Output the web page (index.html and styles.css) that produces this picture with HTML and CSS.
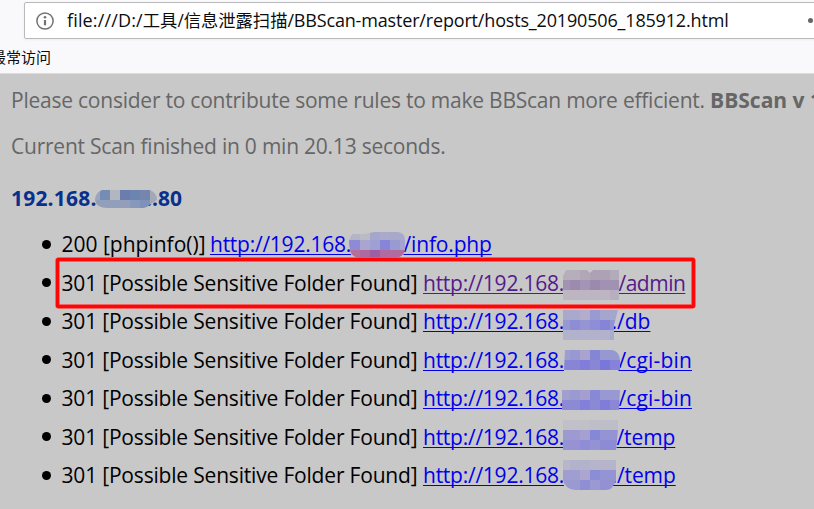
FILE: index.html
```html
<!DOCTYPE html>
<html lang="zh-CN">
<head>
<meta charset="utf-8">
<title>BBScan report</title>
<link rel="stylesheet" href="styles.css">
</head>
<body>
<header class="chrome">
  <div class="urlbar">
    <svg class="info" viewBox="0 0 18 18"><circle cx="9" cy="9" r="8.1" fill="none" stroke="#737373" stroke-width="1.5"/><circle cx="9" cy="5.3" r="1.3" fill="#737373"/><path d="M9 8v5.3" stroke="#737373" stroke-width="2.2"/></svg>
    <span class="url"><span class="scheme">file:///D:/</span><span class="cjk">工具/信息泄露扫描</span><span class="path">/BBScan-master/report/hosts_20190506_185912.html</span></span>
    <span class="more"></span>
  </div>
  <div class="bookmarks">最常访问</div>
</header>
<main class="report">
  <p class="note">Please consider to contribute some rules to make BBScan more efficient. <b>BBScan v 1.4</b></p>
  <p class="note done">Current Scan finished in 0 min 20.13 seconds.</p>
  <h2 class="host"><span>192.168.</span><span class="port">..80</span></h2>
  <ul class="results">
    <li><span class="ok">200 [phpinfo()]</span><a><span class="ip">http://192.168.</span><span class="tail info-php">/info.php</span></a></li>
    <li><span class="found">301 [Possible Sensitive Folder Found]</span><a class="visited"><span class="ip">http://192.168.</span><span class="tail admin">/admin</span></a></li>
    <li><span class="found">301 [Possible Sensitive Folder Found]</span><a><span class="ip">http://192.168.</span><span class="tail dotted">./db</span></a></li>
    <li><span class="found">301 [Possible Sensitive Folder Found]</span><a><span class="ip">http://192.168.</span><span class="tail cgi">/cgi-bin</span></a></li>
    <li><span class="found">301 [Possible Sensitive Folder Found]</span><a><span class="ip">http://192.168.</span><span class="tail cgi">/cgi-bin</span></a></li>
    <li><span class="found">301 [Possible Sensitive Folder Found]</span><a><span class="ip">http://192.168.</span><span class="tail temp">/temp</span></a></li>
    <li><span class="found">301 [Possible Sensitive Folder Found]</span><a><span class="ip">http://192.168.</span><span class="tail temp dotted">./temp</span></a></li>
  </ul>
</main>
<svg class="marks" viewBox="0 0 814 509">
  <defs>
    <clipPath id="c0"><path d="M102 190H150Q157 193 157 200L148 206Q146 208 141 208H108Q96 208 95 200Q95 193 102 190Z"/></clipPath>
    <clipPath id="c1"><path d="M353 234H365L374 232L398 232Q405 233 405 240V250Q404 257 395 258L365 259Q350 258 350 249Q347 238 353 234Z"/></clipPath>
    <clipPath id="c2"><path d="M566 270H587L590 273L593 270H619V300H563V276Z"/></clipPath>
    <clipPath id="c3"><path d="M563 310H618L614 325V340H563Z"/></clipPath>
    <clipPath id="c4"><path d="M565 350H612Q619 351 620 360V370H564Z"/></clipPath>
    <clipPath id="c5"><path d="M562 390H620L619 410H562Z"/></clipPath>
    <clipPath id="c6"><path d="M563 420H618V430L616 450H563V430Z"/></clipPath>
    <clipPath id="c7"><path d="M563 460H616V480Q613 490 606 490H575Q565 489 563 480Z"/></clipPath>
  </defs>
  <g clip-path="url(#c0)"><path fill="#9ba6bb" d="M90 190h10v10h-10z"/><path fill="#758cb5" d="M100 190h10v10h-10z"/><path fill="#b1b6c1" d="M110 190h10v10h-10z"/><path fill="#6b7dac" d="M120 190h10v10h-10z"/><path fill="#6c84b1" d="M130 190h10v10h-10z"/><path fill="#7684ae" d="M140 190h10v10h-10z"/><path fill="#a3a8b9" d="M150 190h10v20h-10z"/><path fill="#919fba" d="M90 200h30v10h-30z"/><path fill="#949eba" d="M120 200h10v10h-10z"/><path fill="#8799bb" d="M130 200h10v10h-10z"/><path fill="#7e91b9" d="M140 200h10v10h-10z"/></g>
  <g clip-path="url(#c1)"><path fill="#b5b4c6" d="M345 230h15v10h-15z"/><path fill="#bbbac7" d="M360 230h10v10h-10z"/><path fill="#a5a6cc" d="M370 230h10v10h-10z"/><path fill="#aaa9ca" d="M380 230h10v10h-10z"/><path fill="#a8a8cd" d="M390 230h20v10h-20z"/><path fill="#8c8bd4" d="M345 240h15v10h-15z"/><path fill="#aaa4cf" d="M360 240h10v10h-10z"/><path fill="#9e9fd2" d="M370 240h10v10h-10z"/><path fill="#8785d8" d="M380 240h10v10h-10z"/><path fill="#999ad2" d="M390 240h10v10h-10z"/><path fill="#a5a3d0" d="M400 240h10v10h-10z"/><path fill="#b66e9b" d="M345 250h15v10h-15z"/><path fill="#ae6a9e" d="M360 250h10v10h-10z"/><path fill="#9d5fa3" d="M370 250h10v10h-10z"/><path fill="#b26ba0" d="M380 250h30v10h-30z"/></g>
  <g clip-path="url(#c2)"><path fill="#b6aeba" d="M560 270h20v10h-20z"/><path fill="#b1a8b7" d="M580 270h10v10h-10z"/><path fill="#ada2b5" d="M590 270h20v10h-20z"/><path fill="#b4abba" d="M610 270h10v10h-10z"/><path fill="#a294b0" d="M560 280h10v10h-10z"/><path fill="#9c8baf" d="M570 280h10v10h-10z"/><path fill="#a595b4" d="M580 280h10v10h-10z"/><path fill="#9b89ae" d="M590 280h10v10h-10z"/><path fill="#a191b2" d="M600 280h20v10h-20z"/><path fill="#bdb5c1" d="M560 290h50v10h-50z"/><path fill="#b6afc0" d="M610 290h10v10h-10z"/></g>
  <g clip-path="url(#c3)"><path fill="#a9aacb" d="M560 310h20v10h-20z"/><path fill="#b1adca" d="M580 310h10v10h-10z"/><path fill="#979bd0" d="M590 310h10v10h-10z"/><path fill="#a5a6cd" d="M600 310h20v10h-20z"/><path fill="#9998d2" d="M560 320h10v10h-10z"/><path fill="#8c8dd5" d="M570 320h10v10h-10z"/><path fill="#9794d3" d="M580 320h10v10h-10z"/><path fill="#8d8ed5" d="M590 320h10v10h-10z"/><path fill="#8584d9" d="M600 320h10v10h-10z"/><path fill="#9292d3" d="M610 320h10v10h-10z"/><path fill="#b3b2cd" d="M560 330h50v10h-50z"/><path fill="#a9abcf" d="M610 330h10v10h-10z"/></g>
  <g clip-path="url(#c4)"><path fill="#9d9dd0" d="M560 350h10v10h-10z"/><path fill="#9899d2" d="M570 350h10v10h-10z"/><path fill="#aaa3ce" d="M580 350h10v10h-10z"/><path fill="#8386d5" d="M590 350h10v10h-10z"/><path fill="#9797d2" d="M600 350h20v10h-20z"/><path fill="#8885d6" d="M560 360h20v10h-20z"/><path fill="#817edb" d="M580 360h10v10h-10z"/><path fill="#8986d6" d="M590 360h10v10h-10z"/><path fill="#7a77da" d="M600 360h10v10h-10z"/><path fill="#8582d8" d="M610 360h10v10h-10z"/></g>
  <g clip-path="url(#c5)"><path fill="#a19fce" d="M560 390h10v10h-10z"/><path fill="#9a9ad1" d="M570 390h10v10h-10z"/><path fill="#a59fd0" d="M580 390h10v10h-10z"/><path fill="#8789d6" d="M590 390h10v10h-10z"/><path fill="#9898d3" d="M600 390h20v10h-20z"/><path fill="#8c89d5" d="M560 400h20v10h-20z"/><path fill="#8380da" d="M580 400h10v10h-10z"/><path fill="#8b88d6" d="M590 400h10v10h-10z"/><path fill="#7f7dd9" d="M600 400h10v10h-10z"/><path fill="#8b87d6" d="M610 400h10v10h-10z"/></g>
  <g clip-path="url(#c6)"><path fill="#c1c0c9" d="M560 420h30v10h-30z"/><path fill="#bebec9" d="M590 420h30v10h-30z"/><path fill="#9c9ad1" d="M560 430h20v10h-20z"/><path fill="#a5a0cf" d="M580 430h10v10h-10z"/><path fill="#8488d6" d="M590 430h10v10h-10z"/><path fill="#9494d3" d="M600 430h20v10h-20z"/><path fill="#9692d3" d="M560 440h20v10h-20z"/><path fill="#8f8dd5" d="M580 440h10v10h-10z"/><path fill="#9592d3" d="M590 440h10v10h-10z"/><path fill="#8e8bd6" d="M600 440h20v10h-20z"/></g>
  <g clip-path="url(#c7)"><path fill="#b8b6cb" d="M560 460h10v10h-10z"/><path fill="#b2b2cc" d="M570 460h20v10h-20z"/><path fill="#b5b4cb" d="M590 460h30v10h-30z"/><path fill="#a09ed1" d="M560 470h20v10h-20z"/><path fill="#aba5cf" d="M580 470h10v10h-10z"/><path fill="#8b8dd7" d="M590 470h10v10h-10z"/><path fill="#9493d4" d="M600 470h20v10h-20z"/><path fill="#9b99d1" d="M560 480h20v10h-20z"/><path fill="#908fd5" d="M580 480h10v10h-10z"/><path fill="#9c98d2" d="M590 480h10v10h-10z"/><path fill="#9390d4" d="M600 480h20v10h-20z"/></g>
  <rect x="57.5" y="259.5" width="636" height="47" rx="1" fill="none" stroke="#ff7070" stroke-width="4.6"/>
  <rect x="57.5" y="259.5" width="636" height="47" rx="1" fill="none" stroke="#fa0808" stroke-width="3.4"/>
</svg>
</body>
</html>
```
FILE: styles.css
```css
* { box-sizing: border-box; }
html, body { margin: 0; width: 814px; height: 509px; overflow: hidden; }
body { position: relative; background: #c8c8c8; font: 21px "Open Sans", "Noto Sans CJK SC", sans-serif; }
.chrome { height: 74px; padding: 2px 0 0 24px; background: #f9f9fb; border-bottom: 1px solid #dedee0; }
.urlbar { display: flex; align-items: center; height: 37px; width: 800px; border: 1px solid #b9b9bb; border-radius: 2px; background: #fff; box-shadow: 0 1px 3px #0000000d; padding-left: 11px; }
.info { width: 18px; height: 18px; margin-right: 13px; flex: none; }
.url { display: flex; align-items: baseline; width: 741px; font-size: 18px; line-height: 30px; color: #0c0c0d; white-space: nowrap; flex: none; }
.scheme { letter-spacing: .15px; }
.cjk { font-size: 17.3px; }
.path { letter-spacing: -.17px; }
.more { width: 5px; height: 5px; border-radius: 50%; background: #666; flex: none; }
.bookmarks { margin: 6px 0 0 -33px; font: 15px/24px "Noto Sans CJK SC", sans-serif; color: #0c0c0d; }
.report { padding: 12px 0 0 11px; }
.note { height: 28px; margin: 0 0 18px; line-height: 28px; color: #666; white-space: nowrap; letter-spacing: -.233px; }
.note b { letter-spacing: 0; }
.done { letter-spacing: -.23px; margin-bottom: 24px; }
.host { display: flex; margin: 0; height: 41px; font-size: 21px; line-height: 28px; color: #08308c; letter-spacing: .2px; }
.host span:first-child { width: 135px; }
.port { letter-spacing: 0; }
.results { list-style: none; margin: 0; padding: 0 0 0 31px; color: #000; }
.results li { display: flex; align-items: center; height: 38.5px; line-height: 38.5px; white-space: nowrap; }
.results li::before { content: ""; width: 9px; height: 9px; margin-right: 10.5px; border-radius: 50%; background: #000; }
.ok { width: 148.5px; }
.found { width: 361.5px; letter-spacing: -.185px; }
a { display: flex; color: #00e; text-decoration: underline 1px; text-underline-offset: 2px; text-decoration-skip-ink: none; }
a.visited { color: #551a8b; }
.ip { width: 193.5px; letter-spacing: -.25px; }
.tail.info-php { letter-spacing: -.16px; }
.tail.admin { margin-left: 2px; letter-spacing: -.5px; }
.tail.cgi { margin-left: 2px; letter-spacing: .15px; }
.tail.temp { letter-spacing: -.1px; }
.tail.dotted { margin-left: -5px; }
.marks { position: absolute; left: 0; top: 0; width: 814px; height: 509px; }
```
